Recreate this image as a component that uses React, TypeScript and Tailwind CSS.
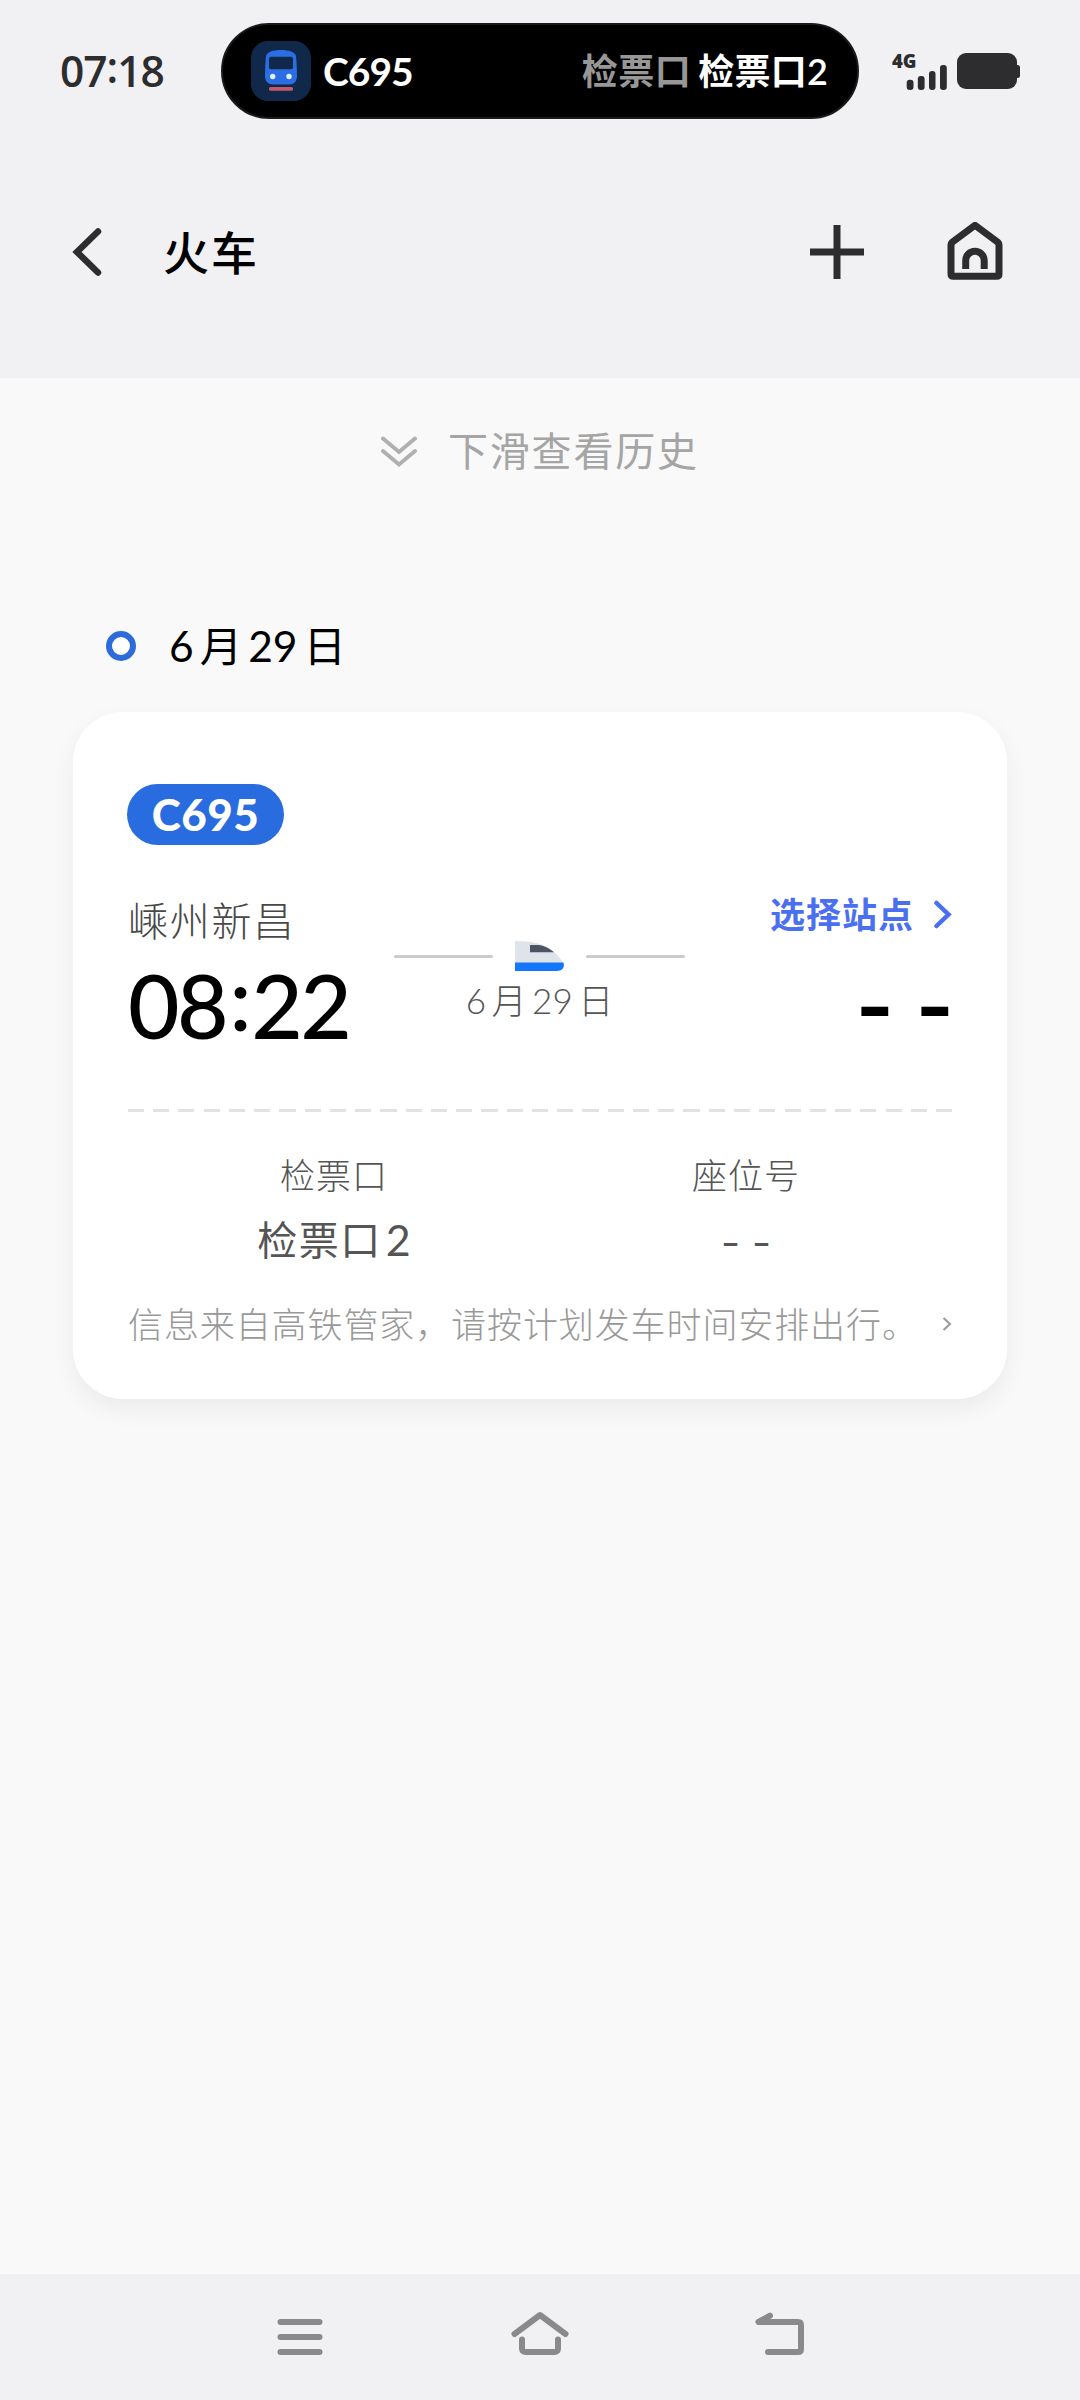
import type { ReactNode } from 'react'

function TrainBadge() {
  return (
    <svg width="60" height="60" viewBox="0 0 60 60" className="shrink-0">
      <rect width="60" height="60" rx="17" fill="#10294b" />
      <path d="M15 15C16 11 22 9 30 9s14 2 15 6c.6 6 1 14 1 20 0 5-3 8.500-8 8.500H22c-5 0-8-3.500-8-8.500 0-6 .4-14 1-20z" fill="#2b6de3" />
      <rect x="18" y="15.700" width="24" height="12.500" rx="2" fill="#10294b" />
      <circle cx="21.700" cy="35.500" r="2.700" fill="#e4efff" />
      <circle cx="38" cy="35.500" r="2.700" fill="#e4efff" />
      <rect x="18" y="46" width="24" height="3.700" rx="1.500" fill="#c4586a" />
    </svg>
  )
}

function Signal() {
  return (
    <svg width="130" height="50" viewBox="891 46 130 50" fill="#2d2d2f" className="shrink-0">
      <text x="892" y="68" fontSize="18.500" fontWeight="800" fontFamily="Open Sans, sans-serif">4G</text>
      <rect x="906.700" y="79.700" width="6.800" height="10.300" rx="3" />
      <rect x="917.800" y="76" width="6.800" height="14" rx="3" />
      <rect x="929" y="71" width="6.500" height="19" rx="3" />
      <rect x="940" y="65" width="6.800" height="25" rx="3" />
      <rect x="957" y="53" width="60" height="36" rx="9" />
      <rect x="1013" y="65" width="7" height="13" rx="2.500" />
    </svg>
  )
}

function StatusBar() {
  return (
    <div className="flex h-[142px] items-center">
      <div className="flex w-[221px] shrink-0 pl-[60px] font-[family-name:'Open_Sans',sans-serif] text-[42.5px] leading-[60px] font-semibold tracking-[-1px] text-[#2d2d2f]">
        <span>07</span>
        <span className="-mt-1">:</span>
        <span>18</span>
      </div>
      <div className="flex h-24 w-[638px] shrink-0 items-center rounded-full border-2 border-[#1a1a1a] bg-black pl-7 pr-[29px] text-[36px] font-semibold text-white">
        <TrainBadge />
        <span className="ml-3 text-[39px] font-bold tracking-[-1px]">C695</span>
        <span className="ml-auto tracking-[0.5px] text-[#979797]">检票口</span>
        <span className="ml-[7px] tracking-[0.2px]">检票口2</span>
      </div>
      <div className="ml-8">
        <Signal />
      </div>
    </div>
  )
}

function Header() {
  return (
    <header className="flex h-[236px] items-center pb-4 text-[#2d2d2f]">
      <svg width="32" height="50" viewBox="72 227 32 50" fill="none" stroke="currentColor" strokeWidth="6.500" strokeLinecap="round" className="ml-[72px]">
        <path d="M98 231.500 77 252l21 20.500" strokeLinejoin="miter" />
      </svg>
      <h1 className="ml-[59px] text-[46px] font-medium tracking-[2px] text-black">火车</h1>
      <svg width="54" height="54" viewBox="0 0 54 54" fill="none" stroke="currentColor" strokeWidth="7" strokeLinecap="butt" className="ml-auto">
        <path d="M27 0v54M0 27h54" />
      </svg>
      <svg width="56" height="60" viewBox="947 222 56 60" fill="none" stroke="currentColor" strokeWidth="7" strokeLinejoin="round" className="mr-[77px] ml-[83px]">
        <path d="M975 225.300 997.500 242q1.500 1.300 1.500 3v29q0 2.300-2.300 2.300h-43.400q-2.300 0-2.300-2.300v-29q0-1.700 1.500-3z" />
        <path d="M965.700 269v-8.500a9.200 9.200 0 0 1 18.500 0v8.500" />
      </svg>
    </header>
  )
}

function DateText({ className }: { className: string }) {
  return (
    <div className={`flex ${className}`}>
      <span>6</span>
      <span>月</span>
      <span>29</span>
      <span>日</span>
    </div>
  )
}

function Detail({ label, children }: { label: string; children: ReactNode }) {
  return (
    <div className="flex flex-col items-center text-[#555]">
      <div className="h-[50px] text-[35px] leading-[50px] font-light tracking-[1px]">{label}</div>
      <div className="mt-[15px] flex h-[50px] text-[40px] leading-[50px]">{children}</div>
    </div>
  )
}

function BulletTrain() {
  return (
    <svg width="49" height="30" viewBox="0 0 49 30">
      <path d="M0 0C18 0 30 3 38 10c5 4.500 9 9 10.500 13H0z" fill="#dfe3ea" />
      <path d="M15 4h8c6 .5 12 3.500 16 7.300H15z" fill="#4a5462" />
      <path d="M0 21.500h48.500c1.500 4.500-1 8.500-6.500 8.500H0z" fill="#1476fb" />
    </svg>
  )
}

function TripCard() {
  return (
    <section className="mx-[73px] h-[687px] rounded-[50px] bg-white px-[55px] pt-[72px] shadow-[0_10px_24px_rgba(0,0,0,0.06)]">
      <div className="-ml-px flex h-[61px] w-[157px] items-center justify-center rounded-full bg-[#286ce0] text-[44px] leading-[61px] font-black tracking-[0.5px] text-white">C695</div>

      <div className="flex h-[264px]">
        <div className="w-[266px] pt-[45px]">
          <div className="h-[60px] text-[40px] leading-[62px] font-light tracking-[1.8px] whitespace-nowrap text-[#484848]">嵊州新昌</div>
          <div className="mt-2.5 flex h-[90px] text-[89px] leading-[90px] font-medium tracking-[-2.5px] text-black">
            <span>08</span>
            <span className="-mt-2 mr-[2px] ml-[3px]">:</span>
            <span>22</span>
          </div>
        </div>
        <div className="w-[291px] pt-24">
          <div className="flex h-[30px] items-center justify-between">
            <span className="h-[3px] w-[99px] rounded-full bg-[#cbcbcb]" />
            <BulletTrain />
            <span className="h-[3px] w-[99px] rounded-full bg-[#cbcbcb]" />
          </div>
          <DateText className="mt-1.5 h-12 justify-center gap-[5.5px] text-[35px] leading-[46px] font-light text-[#555]" />
        </div>
        <div className="flex flex-1 flex-col items-end pt-[45px]">
          <div className="flex h-[48px] items-center text-[35px] leading-[48px] font-semibold tracking-[1px] text-[#4a6ff0]">
            选择站点
            <svg width="18" height="29" viewBox="0 0 18 29" fill="none" stroke="currentColor" strokeWidth="4.500" strokeLinecap="round" className="ml-[20px]">
              <path d="M2.500 3 14.500 14.500 2.500 26" />
            </svg>
          </div>
          <div className="mt-[21px] flex h-[90px] text-[90px] leading-[90px] font-bold text-black">
            <span className="mr-[27px] scale-x-115">-</span>
            <span className="scale-x-115">-</span>
          </div>
        </div>
      </div>

      <div className="h-[3px] bg-[repeating-linear-gradient(90deg,#e2e2e2_0_16px,transparent_16px_25.25px)]" />

      <div className="mt-[38px] grid grid-cols-2">
        <Detail label="检票口">
          <span className="tracking-[1.5px]">检票口</span>
          <span className="ml-1 text-[43px]">2</span>
        </Detail>
        <Detail label="座位号">
          <span className="mt-[2px] mr-4 scale-x-135">-</span>
          <span className="mt-[2px] scale-x-135">-</span>
        </Detail>
      </div>

      <div className="mt-[39px] flex h-10 items-center text-[35px] leading-[40px] font-light tracking-[0.9px] text-[#999]">
        <span className="whitespace-nowrap">信息来自高铁管家，请按计划发车时间安排出行。</span>
        <svg width="10" height="14" viewBox="0 0 10 14" fill="none" stroke="currentColor" strokeWidth="2" className="ml-auto shrink-0">
          <path d="M1.500 1 8 7 1.500 13" />
        </svg>
      </div>
    </section>
  )
}

function NavBar() {
  return (
    <nav className="flex h-[126px] items-start justify-between bg-[#f1f1f3] pt-9 pr-[274px] pl-[276px]">
      <svg width="48" height="50" viewBox="276 2310 48 50" fill="none" stroke="#8a8a8a" strokeWidth="6" strokeLinecap="round">
        <path d="M280.500 2322h39M280.500 2337h39M280.500 2352h39" />
      </svg>
      <svg width="60" height="50" viewBox="509 2310 60 50" fill="none" stroke="#8a8a8a" strokeWidth="6" strokeLinecap="round" strokeLinejoin="round">
        <path d="M514.500 2334 540 2315l25.500 19M522 2339.500v9q0 3.500 4 3.500h28q4 0 4-3.500v-9" />
      </svg>
      <svg width="52" height="50" viewBox="754 2310 52 50" fill="none" stroke="#8a8a8a" strokeWidth="6" strokeLinecap="round" strokeLinejoin="round">
        <path d="M770 2315.700 758.500 2322H798q3 0 3 3v24q0 3-3 3h-30" />
      </svg>
    </nav>
  )
}

export default function App() {
  return (
    <div className="flex h-[2400px] w-[1080px] flex-col bg-[#f1f1f3] font-[family-name:Lato,'Noto_Sans_CJK_SC',sans-serif]">
      <StatusBar />
      <Header />
      <main className="flex-1 bg-[#f9f9f9]">
        <div className="flex h-[146px] items-center text-[#a5a5a5]">
          <svg width="36" height="32" viewBox="381 436 36 32" fill="none" stroke="#b0b0b0" strokeWidth="4" strokeLinecap="round" className="mt-[2px] ml-[381px]">
            <path d="M383 438.500 399 452l16-13.500M383 451l16 13.500 16-13.500" />
          </svg>
          <span className="ml-[31px] text-[40px] tracking-[1.8px]">下滑查看历史</span>
        </div>
        <div className="flex h-[188px] items-center pt-[55px] pl-[106px]">
          <span className="size-[30px] rounded-full border-6 border-[#2d6bdb] bg-white" />
          <DateText className="ml-[33px] gap-1.5 text-[42.5px] font-normal text-black" />
        </div>
        <TripCard />
      </main>
      <NavBar />
    </div>
  )
}
